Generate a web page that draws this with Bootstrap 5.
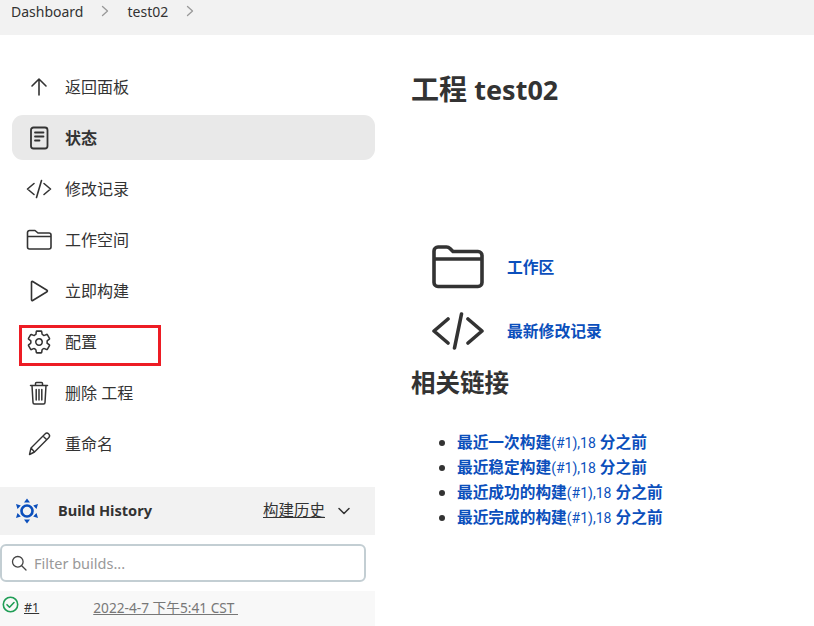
<!DOCTYPE html>
<html lang="zh-CN">
<head>
<meta charset="utf-8">
<title>test02</title>
<link href="https://cdn.jsdelivr.net/npm/bootstrap@5.3.0/dist/css/bootstrap.min.css" rel="stylesheet">
<style>
html,body{height:626px;overflow:hidden}
body{font-family:"Noto Sans","Noto Sans CJK SC",sans-serif;color:#333;background:#fff;font-size:16px}
a{color:inherit}
svg{display:block;fill:none;stroke:#333;stroke-linecap:round;stroke-linejoin:round}
.crumbs{height:35px;background:#f2f2f2;padding:0 11px;font-size:14px;line-height:24px;color:#333}
.crumbs svg{stroke:#999;stroke-width:1.3;margin:5px 18px 0 18px}
.shell{height:591px}
.sidebar{width:375px;padding-top:29px;flex:none}
.side-items{padding:0 0 0 12px;margin:0 0 21px}
.side-item{height:45px;margin-bottom:6px;padding-left:14px;border-radius:11px;color:#333;text-decoration:none;position:relative}
.side-item .ico{width:26px;margin-right:13px;flex:none}
.side-item.is-on{background:#e9e9e9;font-weight:700}
.red-box{position:absolute;left:7px;top:6px;width:142px;height:41px;border:3px solid #ed1c24;pointer-events:none}
.hist-head{height:48px;background:#f2f2f2;padding:0 24px 0 14px}
.hist-title{font-weight:700;font-size:14.6px;margin-left:18px}
.hist-zh{font-size:15.5px;text-decoration:underline;color:#333;margin-right:12px}
.filter-box{width:366px;height:38px;margin-top:9px;border:2px solid #c3ced3;border-radius:6px;padding-left:9px;color:#999;font-size:14.5px}
.filter-box svg{margin-right:7px;stroke:#444}
.filter-box span{padding-top:1px}
.build-row{height:35px;margin-top:9px;background:#f8f8f8;font-size:13.7px;padding-left:2px}
.build-ok{margin-top:5px}
.build-no{margin:0 54px 0 5px;color:#333;font-size:12.5px}
.build-date{color:#777}
.content{padding-left:36px;flex:1}
.page-h{font-size:28px;font-weight:700;line-height:38px;margin:35px 0 0}
.page-h span{font-size:27px}
.task-row{height:64px;padding-left:21px;font-weight:700;color:#0b4fbc}
.task-row svg{margin-bottom:6px}
.task-row a{color:#0b4fbc;text-decoration:none;margin:0 0 4px 23px;font-size:15.8px}
.tasks{margin-top:129px}
.links-h{font-size:24.5px;font-weight:700;line-height:34px;margin:0}
.links{margin:30px 0 0;padding-left:46px;font-size:15.7px;font-weight:700}
.links li{height:25px;line-height:25px}
.links a{color:#0b4fbc;text-decoration:none}
.links i{font-family:Roboto,sans-serif;font-style:normal;font-weight:400;font-size:14px}
</style>
</head>
<body>
<nav class="crumbs d-flex align-items-start">
  <span>Dashboard</span>
  <svg width="8" height="12" viewBox="0 0 8 12"><path d="M1.5 1.5 6.5 6l-5 4.500"/></svg>
  <span>test02</span>
  <svg width="8" height="12" viewBox="0 0 8 12"><path d="M1.5 1.5 6.5 6l-5 4.500"/></svg>
</nav>
<div class="shell d-flex">
  <aside class="sidebar">
    <div class="side-items">
      <a class="side-item d-flex align-items-center" href="#"><span class="ico"><svg width="26" height="26" viewBox="0 0 26 26" stroke-width="1.6"><path d="M13 21V5M6 12l7-7 7 7"/></svg></span>返回面板</a>
      <a class="side-item is-on d-flex align-items-center" href="#"><span class="ico"><svg width="26" height="26" viewBox="0 0 26 26" stroke-width="1.8"><rect x="5" y="2.5" width="16.5" height="21" rx="2.5"/><path d="M9 7.5h8.500M9 11.500h8.500M9 15.500h4.500"/></svg></span>状态</a>
      <a class="side-item d-flex align-items-center" href="#"><span class="ico"><svg width="26" height="26" viewBox="0 0 26 26" stroke-width="1.6"><path d="M8 7.500 1.500 13 8 18.500M18 7.500 24.500 13 18 18.500M15.500 4.500 10.500 21.500"/></svg></span>修改记录</a>
      <a class="side-item d-flex align-items-center" href="#"><span class="ico"><svg width="26" height="26" viewBox="0 0 26 26" stroke-width="1.6"><path d="M1.500 11V5.500a2 2 0 0 1 2-2h5.500l3 2.500h11a2 2 0 0 1 2 2v12a2 2 0 0 1-2 2h-19.500a2 2 0 0 1-2-2zM1.500 9.500h23"/></svg></span>工作空间</a>
      <a class="side-item d-flex align-items-center" href="#"><span class="ico"><svg width="26" height="26" viewBox="0 0 26 26" stroke-width="1.6"><path d="M5.500 4.200v17.600a.8.8 0 0 0 1.200.7L21 13.700a.8.8 0 0 0 0-1.400L6.700 3.500a.8.8 0 0 0-1.200.7z"/></svg></span>立即构建</a>
      <a class="side-item d-flex align-items-center" href="#"><span class="ico"><svg width="26" height="26" viewBox="0 0 512 512" stroke-width="30"><path d="M262.29 192.31a64 64 0 1057.4 57.4 64.13 64.13 0 00-57.4-57.4zM416.39 256a154.34 154.34 0 01-1.53 20.79l45.21 35.46a10.81 10.81 0 012.45 13.75l-42.77 74a10.81 10.81 0 01-13.14 4.59l-44.9-18.08a16.11 16.11 0 00-15.17 1.75A164.48 164.48 0 01325 400.8a15.94 15.94 0 00-8.82 12.14l-6.73 47.89a11.08 11.08 0 01-10.68 9.17h-85.54a11.11 11.11 0 01-10.69-8.87l-6.72-47.82a16.07 16.07 0 00-9-12.22 155.3 155.3 0 01-21.46-12.57 16 16 0 00-15.11-1.71l-44.89 18.07a10.81 10.81 0 01-13.14-4.58l-42.77-74a10.8 10.8 0 012.45-13.75l38.21-30a16.05 16.05 0 006-14.08c-.36-4.17-.58-8.33-.58-12.5s.21-8.27.58-12.35a16 16 0 00-6.07-13.94l-38.19-30A10.81 10.81 0 0149.48 186l42.77-74a10.81 10.81 0 0113.14-4.59l44.9 18.08a16.11 16.11 0 0015.17-1.75A164.48 164.48 0 01187 111.2a15.94 15.94 0 008.82-12.14l6.73-47.89A11.08 11.08 0 01213.23 42h85.54a11.11 11.11 0 0110.69 8.87l6.72 47.82a16.07 16.07 0 009 12.22 155.3 155.3 0 0121.46 12.57 16 16 0 0015.11 1.71l44.89-18.07a10.81 10.81 0 0113.14 4.58l42.77 74a10.8 10.8 0 01-2.45 13.75l-38.21 30a16.05 16.05 0 00-6.05 14.08c.33 4.14.55 8.3.55 12.47z"/></svg></span>配置<span class="red-box"></span></a>
      <a class="side-item d-flex align-items-center" href="#"><span class="ico"><svg width="26" height="26" viewBox="0 0 26 26" stroke-width="1.5"><path d="M4.500 5.500h17M9.500 5.500V3.500a1 1 0 0 1 1-1h5a1 1 0 0 1 1 1v2M6 5.500l1 17a1.500 1.500 0 0 0 1.500 1.500h9a1.500 1.500 0 0 0 1.500-1.500l1-17M10.200 9.500v10.500M13 9.500v10.500M15.800 9.500v10.500"/></svg></span>删除 工程</a>
      <a class="side-item d-flex align-items-center" href="#"><span class="ico"><svg width="26" height="26" viewBox="0 0 26 26" stroke-width="1.4"><path d="M3.500 23.500 5 17 19 3a2.600 2.600 0 0 1 3.700 3.700L8.500 21zM5 17l3.500 4M17 5l3.700 3.700"/></svg></span>重命名</a>
    </div>
    <div class="hist-head d-flex align-items-center">
      <svg width="26" height="28" viewBox="0 0 26 28" style="stroke:#0b4fbc"><circle cx="13" cy="14" r="5.500" stroke-width="2.600"/><path d="M13 1.500l3 4h-6zM13 26.500l3-4h-6zM2 7l4.800 1.500-3.300 3.500zM24 7l-4.800 1.500 3.300 3.500zM2 21l4.800-1.500-3.300-3.500zM24 21l-4.800-1.500 3.300-3.500z" style="fill:#0b4fbc;stroke:none"/></svg>
      <span class="hist-title">Build History</span>
      <span class="hist-zh ms-auto">构建历史</span>
      <svg width="14" height="10" viewBox="0 0 14 10" stroke-width="1.500"><path d="M2 2.500l5 5 5-5"/></svg>
    </div>
    <div class="filter-box d-flex align-items-center">
      <svg width="16" height="16" viewBox="0 0 16 16" stroke-width="1.300"><circle cx="6.800" cy="6.800" r="5.300"/><path d="m10.700 10.700 4.300 4.300"/></svg>
      <span>Filter builds...</span>
    </div>
    <div class="build-row d-flex align-items-center">
      <svg width="17" height="17" viewBox="0 0 17 17" class="build-ok align-self-start" style="stroke:#1f9d55" stroke-width="1.600"><circle cx="8.500" cy="8.500" r="7.200"/><path d="m5 8.700 2.500 2.500 4.500-4.700"/></svg>
      <a class="build-no" href="#">#1</a>
      <a class="build-date" href="#">2022-4-7 下午5:41 CST&nbsp;</a>
    </div>
  </aside>
  <main class="content">
    <h1 class="page-h">工程 <span>test02</span></h1>
    <div class="tasks">
      <div class="task-row d-flex align-items-center">
        <svg width="52" height="44" viewBox="0 0 52 44" stroke-width="3.600"><path d="M2 22V6a4 4 0 0 1 4-4h8.500q2 0 3.500 1.500L21 6.500h25a4 4 0 0 1 4 4v27a4 4 0 0 1-4 4H6a4 4 0 0 1-4-4zM2 14h48"/></svg>
        <a href="#">工作区</a>
      </div>
      <div class="task-row d-flex align-items-center">
        <svg width="52" height="38" viewBox="0 0 52 38" stroke-width="3.600"><path d="M16 7 2 19l14 12M36 7l14 12-14 12M29.500 2 22.500 36"/></svg>
        <a href="#">最新修改记录</a>
      </div>
    </div>
    <h2 class="links-h">相关链接</h2>
    <ul class="links">
      <li><a href="#">最近一次构建<i>(#1),18</i> 分之前</a></li>
      <li><a href="#">最近稳定构建<i>(#1),18</i> 分之前</a></li>
      <li><a href="#">最近成功的构建<i>(#1),18</i> 分之前</a></li>
      <li><a href="#">最近完成的构建<i>(#1),18</i> 分之前</a></li>
    </ul>
  </main>
</div>
<script src="https://cdn.jsdelivr.net/npm/bootstrap@5.3.0/dist/js/bootstrap.bundle.min.js"></script>
</body>
</html>
